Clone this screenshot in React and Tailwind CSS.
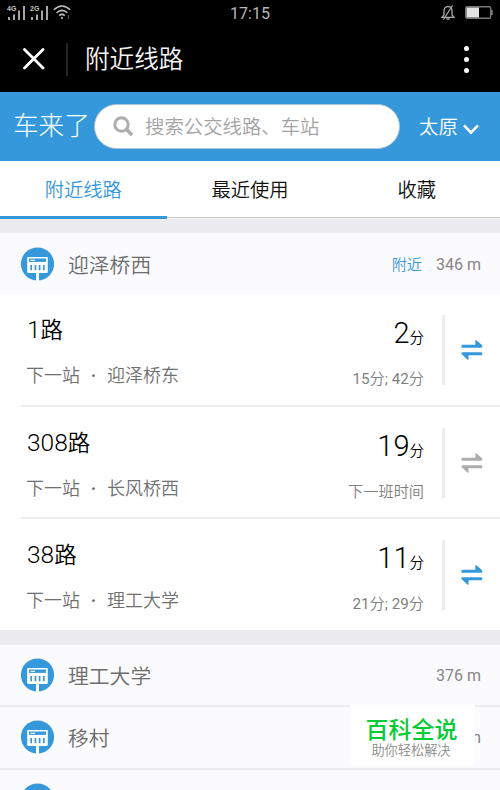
import React from "react";

function StopIcon() {
  return (
    <svg width="34" height="34" viewBox="0 0 34 34" className="shrink-0">
      <circle cx="17.500" cy="17" r="16.600" fill="#3598db" />
      <rect x="7.200" y="10" width="20.600" height="16" rx="1.200" fill="#fff" />
      <rect x="16" y="25" width="3" height="9" fill="#fff" />
      <rect x="9" y="11.500" width="17" height="3.400" fill="#3598db" />
      <path d="M10.500 13.300h4.500" stroke="#fff" strokeWidth="1.100" />
      <path d="M11.200 18v5.200M15.400 18v5.200M19.600 18v5.200M23.800 18v5.200" stroke="#3598db" strokeWidth="1.700" />
    </svg>
  );
}

function SwapIcon({ color }) {
  return (
    <svg width="22" height="20" viewBox="0 0 22 20" className="shrink-0" fill={color}>
      <path d="M1.500 4.800H14.300V1Q14.300 -.1 15.300 .3L20.600 4.700Q21.400 5.400 21.400 6.600Q21.400 7.700 20.200 7.700H1.500Q.4 7.700 .4 6.200T1.500 4.800Z" />
      <path d="M20.300 12.300H1.600Q.2 12.300 .5 13.900L6.300 19.400Q7.500 20.200 7.500 19V15.300H20.300Q21.400 15.300 21.400 13.800T20.300 12.300Z" />
    </svg>
  );
}

function Signal({ label }) {
  return (
    <svg width="20" height="16" viewBox="0 0 20 16">
      <text x="0" y="6" fontSize="7" fontWeight="bold" fontFamily="Liberation Sans, sans-serif" fill="#c4c4c4">{label}</text>
      <path d="M2 12v3M7 9.500v5.500M12 5.500v9.500M17 1v14" stroke="#b8b8b8" strokeWidth="1.800" />
    </svg>
  );
}

function StatusBar() {
  return (
    <div className="grid h-[27px] grid-cols-[1fr_auto_1fr] items-center text-[#b8b8b8]">
      <div className="flex items-center gap-[3px] pb-[2px] pl-[7px]">
        <Signal label="4G" />
        <Signal label="2G" />
        <svg width="18" height="15" viewBox="0 0 18 15" fill="none" stroke="#c0c0c0" strokeWidth="1.500">
          <path d="M.8 4.800Q9-2.800 17.200 4.800M3.600 7.800Q9 3 14.400 7.800M6.200 10.600Q9 8.200 11.800 10.600" />
          <circle cx="9" cy="13" r="1.100" fill="#c0c0c0" stroke="none" />
          <path d="M15.500 10v4" stroke="#555" strokeWidth="1.200" />
        </svg>
      </div>
      <div className="pt-px text-[16px] leading-[26px]">17:15</div>
      <div className="flex items-center justify-end gap-[10px] pb-[2px] pr-[7px]">
        <svg width="14" height="15" viewBox="0 0 14 15" fill="none" stroke="#aaa" strokeWidth="1.300">
          <path d="M1 12.300H13L11 10V6C11 3 9.500 1.700 7 1.700S3 3 3 6V10L1 12.300ZM5.500 13.500Q7 14.800 8.500 13.500M11.500 .5L2.500 14.500" />
        </svg>
        <svg width="28" height="13" viewBox="0 0 28 13">
          <rect x=".7" y=".7" width="25" height="11.600" rx="1.500" fill="none" stroke="#777" strokeWidth="1.400" />
          <rect x="1.500" y="1.500" width="12.500" height="10" fill="#e4e4e4" />
          <path d="M26 4h1.800v5H26" fill="#777" />
        </svg>
      </div>
    </div>
  );
}

function TitleBar() {
  return (
    <div className="flex h-[64px] items-center pl-[23px] pr-[31px]">
      <svg width="22" height="22" viewBox="0 0 22 22" stroke="#fff" strokeWidth="2.800" strokeLinecap="round">
        <path d="M1.500 1.500L20 20M20 1.500L1.500 20" />
      </svg>
      <div className="ml-[21px] h-[33px] w-[2px] bg-[#262626]" />
      <h1 className="ml-[17px] flex-1 pt-px text-[24.600px] font-[350] leading-[36px] text-[#f4f4f4]">附近线路</h1>
      <div className="flex flex-col gap-[6px]">
        <i className="size-[5px] rounded-full bg-white" />
        <i className="size-[5px] rounded-full bg-white" />
        <i className="size-[5px] rounded-full bg-white" />
      </div>
    </div>
  );
}

function SearchHeader() {
  return (
    <div className="flex h-[69px] items-center bg-[#3598db] pl-[13px] text-white">
      <div className="w-[81px] whitespace-nowrap pb-[6px] font-['Noto_Sans_CJK_SC',sans-serif] text-[25.600px] font-light leading-[36px]">车来了</div>
      <div className="flex h-[45px] w-[306px] items-center rounded-full border border-[#a9c6da] bg-white pl-[18px]">
        <svg width="21" height="21" viewBox="0 0 21 21" fill="none" stroke="#adadad">
          <circle cx="8.500" cy="8.500" r="6.700" strokeWidth="3" />
          <path d="M13.500 13.500L19 19" strokeWidth="3.700" />
        </svg>
        <span className="ml-[11px] mt-[3px] text-[19.400px] font-light leading-[28px] text-[#a3a3a3]">搜索公交线路、车站</span>
      </div>
      <div className="ml-[19px] mt-[3px] text-[19.400px] font-[350] leading-[28px]">太原</div>
      <svg className="ml-[5px] mt-[5px]" width="16" height="11" viewBox="0 0 16 11" fill="none" stroke="#fff" strokeWidth="2.600">
        <path d="M1 1.300L8 8.700L15 1.300" />
      </svg>
    </div>
  );
}

function Tabs() {
  return (
    <div className="grid h-[58px] grid-cols-3 bg-[#f4f4f6] text-center text-[19.300px] font-[350] leading-[51px] text-[#111]">
      <div className="border-b-[3px] border-[#3598db] bg-white pt-[4px] text-[#3598db]">附近线路</div>
      <div className="mb-px border-b border-[#ccc] bg-white pt-[4px]">最近使用</div>
      <div className="mb-px border-b border-[#ccc] bg-white pt-[4px]">收藏</div>
    </div>
  );
}

function Station({ name, distance, near, line }) {
  return (
    <div className={"flex shrink-0 items-center bg-[#fbfbfd] pl-[20px] pr-[19px] " + (line ? "h-[62.500px] border-b-2 border-[#ececec]" : "h-[61px]")}>
      <StopIcon />
      <span className="ml-[14px] mt-[4px] flex-1 text-[20.800px] font-light leading-[30px] text-[#6c6c6c]">{name}</span>
      {near && <span className="mr-[14px] mt-[3px] text-[15.200px] font-light leading-[24px] text-[#3598db]">附近</span>}
      <span className="mt-[2px] text-[16px] leading-[24px] text-[#858585]">{distance}</span>
    </div>
  );
}

function Route({ name, next, mins, later, active = true, last }) {
  return (
    <div className={"ml-[21px] flex h-[112.500px] pr-[17px] " + (last ? "" : "border-b-2 border-[#ededed]")}>
      <div className="flex-1 pl-[6px] pt-[19px]">
        <div className="text-[22.500px] font-[350] leading-[34px] text-black"><span className="text-[24.500px]">{name}</span>路</div>
        <div className="-ml-[1px] mt-[15px] flex text-[18px] font-light leading-[28px] text-[#707070]">
          <span>下一站</span>
          <span className="w-[27px] text-center font-bold">·</span>
          <span>{next}</span>
        </div>
      </div>
      <div className="pt-[21px] text-right">
        <div className="text-[14.500px] font-light leading-[36px] text-black"><span className="text-[29px]">{mins}</span>分</div>
        <div className="mt-[10px] text-[15.200px] leading-[24px] text-[#808080]">{later}</div>
      </div>
      <div className="ml-[18px] mt-[21px] h-[70px] w-[3px] bg-[#ededed]" />
      <div className="ml-[16px] mt-[46px]"><SwapIcon color={active ? "#3598db" : "#adadad"} /></div>
    </div>
  );
}

export default function App() {
  return (
    <div className="relative h-[790px] w-[500px] overflow-hidden bg-[#ebebf0] font-[Roboto,'Noto_Sans_CJK_SC_DemiLight','Noto_Sans_CJK_SC',sans-serif]" lang="zh-CN">
      <div className="h-[92px] bg-black">
        <StatusBar />
        <TitleBar />
      </div>
      <SearchHeader />
      <Tabs />
      <div className="mt-[14px]">
        <Station name="迎泽桥西" distance="346 m" near />
        <div className="h-[336px] bg-white">
          <Route name="1" next="迎泽桥东" mins="2" later="15分; 42分" />
          <Route name="308" next="长风桥西" mins="19" later="下一班时间" active={false} />
          <Route name="38" next="理工大学" mins="11" later="21分; 29分" last />
        </div>
      </div>
      <div className="mt-[14.500px]">
        <Station name="理工大学" distance="376 m" line />
        <Station name="移村" distance="m" line />
        <Station name="" distance="" />
      </div>
      <div className="absolute left-[350px] top-[705px] flex h-[60px] w-[125px] flex-col items-center bg-white">
        <div className="mr-[2px] mt-[9px] font-['Noto_Sans_CJK_SC',sans-serif] text-[23px] font-medium leading-[28px] text-[#0c3]">百科全说</div>
        <div className="mr-[3px] mt-px text-[13.200px] leading-[16px] text-[#8a8a8a]">助你轻松解决</div>
      </div>
    </div>
  );
}
